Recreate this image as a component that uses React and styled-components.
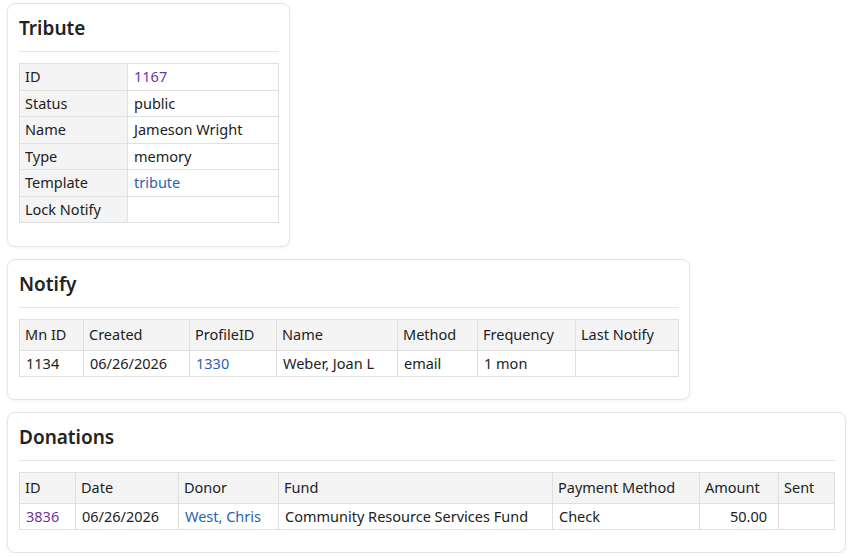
import React from "react";
import styled, { createGlobalStyle } from "styled-components";

const Global = createGlobalStyle`
  html, body { margin: 0; padding: 0; background: #ffffff; }
  body { font-family: "Noto Sans", "Open Sans", sans-serif; color: #222; }
`;

const Page = styled.div`
  display: flex;
  flex-direction: column;
  align-items: flex-start;
  gap: 12px;
  padding: 3px 0 0 7px;
`;

const Card = styled.section`
  border: 1px solid #e2e5ec;
  border-radius: 8px;
  box-shadow: 0 1px 3px rgba(30, 40, 60, 0.06);
  padding: 12px 10px ${(p) => p.$pb || 22}px 11px;
  background: #fff;
`;

const Title = styled.h2`
  margin: 0 0 11px 0;
  padding: 0 0 11px 0;
  font-size: 19px;
  line-height: 24px;
  font-weight: 600;
  color: #222;
  border-bottom: 1px solid #e3e6ec;
`;

const Table = styled.table`
  border-collapse: collapse;
  table-layout: fixed;
  font-size: 14.5px;
  line-height: 17.5px;
  color: #222;
`;

const Cell = styled.td`
  border: 1px solid #e0e0e0;
  padding: 4px 6px;
  text-align: ${(p) => (p.$right ? "right" : "left")};
  padding-right: ${(p) => (p.$right ? "11px" : "6px")};
  white-space: nowrap;
  overflow: hidden;
`;

const RowHead = styled.th`
  border: 1px solid #e0e0e0;
  padding: 4px 6px 4px 5px;
  text-align: left;
  font-weight: 400;
  background: #f4f4f4;
  white-space: nowrap;
`;

const ColHead = styled.th`
  border: 1px solid #e0e0e0;
  padding: 6px 6px 6px 5px;
  text-align: left;
  font-weight: 400;
  background: #f4f4f4;
  white-space: nowrap;
  overflow: hidden;
`;

const Link = styled.a`
  color: ${(p) => (p.$visited ? "#6f35a5" : "#2b62b0")};
  text-decoration: none;
`;

function Cols({ widths }) {
  return (
    <colgroup>
      {widths.map((w, i) => (
        <col key={i} style={{ width: w }} />
      ))}
    </colgroup>
  );
}

function DataTable({ widths, headers, rows, rightCols = [] }) {
  const total = widths.reduce((a, b) => a + b, 0);
  return (
    <Table style={{ width: total }}>
      <Cols widths={widths} />
      <thead>
        <tr>
          {headers.map((h) => (
            <ColHead key={h}>{h}</ColHead>
          ))}
        </tr>
      </thead>
      <tbody>
        {rows.map((r, ri) => (
          <tr key={ri}>
            {r.map((c, ci) => (
              <Cell key={ci} $right={rightCols.includes(ci)}>
                {c}
              </Cell>
            ))}
          </tr>
        ))}
      </tbody>
    </Table>
  );
}

export default function App() {
  const tribute = [
    ["ID", <Link href="#" $visited>1167</Link>],
    ["Status", "public"],
    ["Name", "Jameson Wright"],
    ["Type", "memory"],
    ["Template", <Link href="#">tribute</Link>],
    ["Lock Notify", ""],
  ];
  return (
    <>
      <Global />
      <Page>
        <Card $pb={23}>
          <Title>Tribute</Title>
          <Table style={{ width: 259 }}>
            <Cols widths={[108, 151]} />
            <tbody>
              {tribute.map(([k, v]) => (
                <tr key={k}>
                  <RowHead>{k}</RowHead>
                  <Cell>{v}</Cell>
                </tr>
              ))}
            </tbody>
          </Table>
        </Card>
        <Card>
          <Title>Notify</Title>
          <DataTable
            widths={[64, 106, 87, 121, 80, 98, 103]}
            headers={["Mn ID", "Created", "ProfileID", "Name", "Method", "Frequency", "Last Notify"]}
            rows={[["1134", "06/26/2026", <Link href="#">1330</Link>, "Weber, Joan L", "email", "1 mon", ""]]}
          />
        </Card>
        <Card>
          <Title>Donations</Title>
          <DataTable
            widths={[56, 103, 100, 274, 147, 79, 56]}
            headers={["ID", "Date", "Donor", "Fund", "Payment Method", "Amount", "Sent"]}
            rows={[[
              <Link href="#" $visited>3836</Link>,
              "06/26/2026",
              <Link href="#">West, Chris</Link>,
              "Community Resource Services Fund",
              "Check",
              "50.00",
              "",
            ]]}
            rightCols={[5]}
          />
        </Card>
      </Page>
    </>
  );
}
